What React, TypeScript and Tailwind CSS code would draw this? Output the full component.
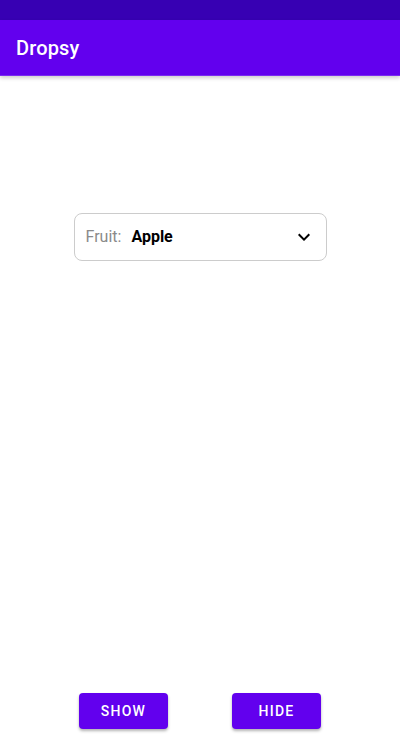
import React from "react";

export default function App() {
  return (
    <div className="flex flex-col h-[751px] w-[400px] bg-white overflow-hidden" style={{ fontFamily: "Roboto, 'Noto Sans', sans-serif" }}>
      <div className="h-[20px] bg-[#3700B3] shrink-0" />
      <div className="h-[56px] bg-[#6200EE] shrink-0 flex items-center px-4 shadow-[0_2px_4px_rgba(0,0,0,0.2)] border-b border-[#7a2bf0] relative z-10">
        <span className="text-white text-[20px] font-medium tracking-[0.15px]">Dropsy</span>
      </div>
      <div className="flex-1 flex flex-col items-center">
        <div className="mt-[137px] w-[253px] h-[48px] border border-[#cccccc] rounded-[8px] flex items-center pl-[11px] pr-[10px]">
          <span className="text-[16px] text-[#8a8a8a]">Fruit:</span>
          <span className="ml-[10px] text-[16px] font-bold text-black">Apple</span>
          <svg className="ml-auto" width="24" height="24" viewBox="0 0 24 24">
            <path d="M7.41 8.59 12 13.17l4.59-4.58L18 10l-6 6-6-6z" fill="#000" />
          </svg>
        </div>
      </div>
      <div className="flex justify-center gap-[64px] pb-[22px]">
        <button className="w-[89px] h-[36px] rounded-[4px] bg-[#6200EE] text-white text-[14px] font-medium tracking-[1.25px] shadow-[0_2px_3px_rgba(0,0,0,0.3)]">SHOW</button>
        <button className="w-[89px] h-[36px] rounded-[4px] bg-[#6200EE] text-white text-[14px] font-medium tracking-[1.25px] shadow-[0_2px_3px_rgba(0,0,0,0.3)]">HIDE</button>
      </div>
    </div>
  );
}
